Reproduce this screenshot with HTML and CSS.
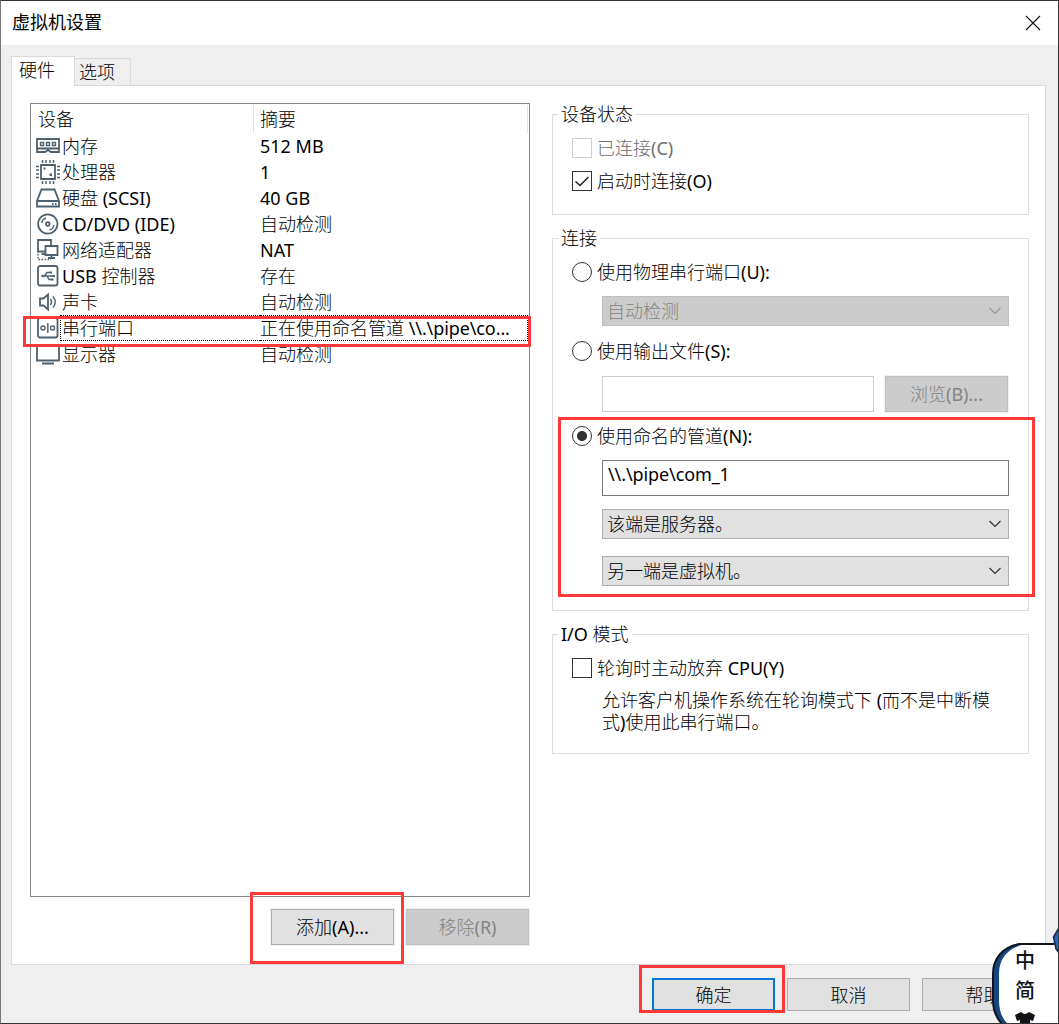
FILE: index.html
```html
<!DOCTYPE html>
<html lang="zh-CN">
<head>
<meta charset="utf-8">
<title>虚拟机设置</title>
<link rel="stylesheet" href="styles.css">
</head>
<body>
<div class="window">
  <header class="titlebar">
    <h1 class="title">虚拟机设置</h1>
    <svg class="close" width="16" height="16" viewBox="0 0 16 16"><path d="M1 1L15 15M15 1L1 15" stroke="#111" stroke-width="1.1" fill="none"/></svg>
  </header>
  <nav class="tabs">
    <div class="tab tab-active">硬件</div>
    <div class="tab">选项</div>
  </nav>
  <main class="panel">
    <section class="left">
      <div class="devices">
        <div class="row head"><span class="name">设备</span><span class="summary">摘要</span></div>
        <div class="row">
          <svg class="icon" viewBox="0 0 24 24"><path d="M1 5H23V18H15L12 16L9 18H1ZM1 14.5H23" /><path class="fine" d="M4.500 8.500h3v3h-3zM10.500 8.500h3v3h-3zM16.500 8.500h3v3h-3z"/></svg>
          <span class="name">内存</span><span class="summary"><span class="en">512 MB</span></span></div>
        <div class="row">
          <svg class="icon" viewBox="0 0 24 24"><path d="M5 5H19V19H5Z"/><path class="pins" d="M6.500 0v3M10 0v3M14 0v3M17.500 0v3M6.500 21v3M10 21v3M14 21v3M17.500 21v3M0 6.500h3M0 10h3M0 14h3M0 17.500h3M21 6.500h3M21 10h3M21 14h3M21 17.500h3"/><path class="solid" d="M7.500 7.500h2v2h-2zM13.500 13.500h2.500v2.500h-2.500z"/></svg>
          <span class="name">处理器</span><span class="summary"><span class="en">1</span></span></div>
        <div class="row">
          <svg class="icon" viewBox="0 0 24 24"><path d="M5.500 3.500H18.500L23 15V20.500H1V15ZM1 15H23M16 18h1.500M19 18h1.500"/></svg>
          <span class="name">硬盘 <span class="en">(SCSI)</span></span><span class="summary"><span class="en">40 GB</span></span></div>
        <div class="row">
          <svg class="icon" viewBox="0 0 24 24"><circle cx="11.800" cy="12" r="9.700"/><circle cx="11.800" cy="12" r="1.800"/><path class="fine" d="M5.800 11A6 6 0 0 1 10 6M17.800 13A6 6 0 0 1 13.600 18"/></svg>
          <span class="name"><span class="en">CD/DVD (IDE)</span></span><span class="summary">自动检测</span></div>
        <div class="row">
          <svg class="icon" viewBox="0 0 24 24"><path d="M9 13.500H2V2H15V7M5.500 16H9"/><path d="M9.500 8H21.500V17H9.500ZM15.500 17V20M12 20H19"/><path class="dots" d="M2 13V21.500H15"/></svg>
          <span class="name">网络适配器</span><span class="summary"><span class="en">NAT</span></span></div>
        <div class="row">
          <svg class="icon" viewBox="0 0 24 24"><rect x="2" y="2" width="19.500" height="19.500" rx="2"/><path class="fine" d="M6 12H18M8.500 12L11 8.500H14M11 12L13 15.500H16"/><path class="solid" d="M4.500 12L7.500 10.200V13.800ZM13.500 7.500h2.500v2h-2.500zM16.500 11h2.500v2h-2.500zM15 14.500h2.500v2h-2.500z"/></svg>
          <span class="name"><span class="en">USB</span> 控制器</span><span class="summary">存在</span></div>
        <div class="row">
          <svg class="icon" viewBox="0 0 24 24"><path d="M4 8.500H7.500L12 4.500V19.500L7.500 15.500H4Z"/><path class="fine" d="M14.500 9Q16.500 12 14.500 15M17 6.500Q21.500 12 17 17.500"/></svg>
          <span class="name">声卡</span><span class="summary">自动检测</span></div>
        <div class="row selected">
          <svg class="icon" viewBox="0 0 24 24"><rect x="2" y="2" width="19.500" height="19.500" rx="2"/><circle class="fine" cx="7" cy="12" r="2"/><circle class="fine" cx="16.500" cy="12" r="2"/><path class="fine" d="M11.800 7V17"/></svg>
          <span class="name">串行端口</span><span class="summary">正在使用命名管道 <span class="en path">\\.\pipe\co...</span></span></div>
        <div class="row">
          <svg class="icon" viewBox="0 0 24 24"><path d="M1 3H23V18.500H1ZM6 21.500H18"/></svg>
          <span class="name">显示器</span><span class="summary">自动检测</span></div>
      </div>
      <div class="actions">
        <button class="btn">添加<span class="en">(A)...</span></button>
        <button class="btn off">移除<span class="en">(R)</span></button>
      </div>
    </section>
    <section class="right">
      <fieldset class="group state">
        <legend>设备状态</legend>
        <label class="option dim"><span class="box"></span><span>已连接<span class="en">(C)</span></span></label>
        <label class="option"><span class="box"><svg width="18" height="18" viewBox="0 0 18 18"><path d="M2.500 9.500L7 13.500L15.500 5" fill="none" stroke="#222" stroke-width="1.600"/></svg></span><span>启动时连接<span class="en">(O)</span></span></label>
      </fieldset>
      <fieldset class="group connection">
        <legend>连接</legend>
        <label class="option"><span class="radio"></span><span>使用物理串行端口<span class="en">(U):</span></span></label>
        <div class="select off physical">自动检测<svg class="chevron" viewBox="0 0 12 8"><path d="M.5 1L6 6.500L11.500 1"/></svg></div>
        <label class="option output"><span class="radio"></span><span>使用输出文件<span class="en">(S):</span></span></label>
        <div class="browse"><div class="field empty"></div><button class="btn off">浏览<span class="en">(B)...</span></button></div>
        <label class="option named"><span class="radio on"></span><span>使用命名的管道<span class="en">(N):</span></span></label>
        <div class="field"><span class="en path">\\.\pipe\com_1</span></div>
        <div class="select near">该端是服务器。<svg class="chevron" viewBox="0 0 12 8"><path d="M.5 1L6 6.500L11.500 1"/></svg></div>
        <div class="select far">另一端是虚拟机。<svg class="chevron" viewBox="0 0 12 8"><path d="M.5 1L6 6.500L11.500 1"/></svg></div>
      </fieldset>
      <fieldset class="group io">
        <legend><span class="en">I/O</span> 模式</legend>
        <label class="option"><span class="box"></span><span>轮询时主动放弃 <span class="en">CPU(Y)</span></span></label>
        <p class="note">允许客户机操作系统在轮询模式下 <span class="en">(</span>而不是中断模<br>式<span class="en">)</span>使用此串行端口。</p>
      </fieldset>
    </section>
  </main>
  <footer class="footer">
    <button class="btn primary">确定</button>
    <button class="btn">取消</button>
    <button class="btn">帮助</button>
  </footer>
  <div class="mark mark-row"></div>
  <div class="mark mark-pipe"></div>
  <div class="mark mark-add"></div>
  <div class="mark mark-ok"></div>
  <div class="ime">
    <svg class="ime-shape" width="69" height="100" viewBox="0 0 69 100">
      <path d="M70 19H30C12 22 3 34 3 49V75C3 86 6 93 13 100H70Z" fill="#174583" stroke="#10151c" stroke-width="2"/>
      <path d="M70 19.500H34C17 23 9 34 9 49V75C9 86 12 94 19 100H70Z" fill="#fff"/>
      <path d="M30 19H64" stroke="#10151c" stroke-width="2"/>
      <path d="M70 1L63.500 12L66 24L70 29Z" fill="#2068bd" stroke="#0c2857" stroke-width="1.500"/>
      <path d="M25 90L31 87Q35 91 39 87L45 90L43 96L40 95V101H30V95L27 96Z" fill="#101216"/>
    </svg>
    <span class="ime-lang">中</span>
    <span class="ime-set">简</span>
  </div>
</div>
</body>
</html>
```
FILE: styles.css
```css
* { box-sizing: border-box; }
body {
  margin: 0;
  font: 300 18px/26px "Noto Sans", "Noto Sans CJK SC", sans-serif;
  color: #000;
}
.window {
  position: relative;
  width: 1059px;
  height: 1024px;
  overflow: hidden;
  display: flex;
  flex-direction: column;
  background: #efefef;
  border: 1px solid #333;
  border-left-color: #777;
}
.titlebar {
  height: 44px;
  padding: 0 17px 0 11px;
  display: flex;
  align-items: center;
  justify-content: space-between;
  background: #fff;
}
.title { margin: -2px 0 0; font-size: 18px; font-weight: 400; }
.tabs {
  height: 40px;
  padding-left: 10px;
  display: flex;
  align-items: flex-end;
}
.tab {
  height: 27px;
  width: 56px;
  padding-left: 4px;
  border: 1px solid #d9d9d9;
  border-left: 0;
  border-bottom: 0;
}
.tab-active {
  width: 64px;
  height: 30px;
  margin-bottom: -1px;
  padding-left: 7px;
  border-left: 1px solid #d9d9d9;
  background: #fff;
  z-index: 1;
}
.panel {
  width: 1035px;
  height: 880px;
  margin-left: 10px;
  padding: 17px 0 0 18px;
  display: flex;
  gap: 22px;
  background: #fff;
  border: 1px solid #d9d9d9;
}
.left { width: 500px; }
.devices {
  height: 794px;
  padding-left: 5px;
  border: 1px solid #828790;
}
.row {
  height: 26px;
  display: flex;
  align-items: center;
  white-space: nowrap;
}
.icon {
  width: 24px;
  height: 24px;
  flex: none;
  margin-right: 2px;
  fill: none;
  stroke: #4f616e;
  stroke-width: 1.8;
}
.icon .fine { stroke-width: 1.4; }
.icon .pins { stroke-width: 1.5; }
.icon .solid { fill: #4f616e; stroke: none; }
.icon .dots { stroke-width: 1.5; stroke-dasharray: 1.5 1.5; }
.name { width: 198px; }
.head { height: 29px; padding: 1px 0 0; }
.head .name { width: 218px; height: 28px; padding: 1px 0 0 2px; border-right: 1px solid #e3e3e3; }
.head .summary { width: 274px; height: 28px; padding: 1px 0 0 6px; border-right: 1px solid #e3e3e3; }
.selected .icon { margin-right: 0; }
.selected .name { width: 200px; height: 26px; padding-left: 1px; border: 1px dotted #000; border-right: 0; line-height: 24px; }
.selected .summary { width: 268px; height: 26px; border: 1px dotted #000; border-left: 0; line-height: 24px; }
.en { font-weight: 400; }
.path { letter-spacing: -0.1px; }
.actions {
  padding: 12px 1px 0 0;
  display: flex;
  justify-content: flex-end;
  gap: 12px;
}
.btn {
  width: 123px;
  height: 36px;
  padding: 0;
  font: inherit;
  color: #000;
  background: #e1e1e1;
  border: 1px solid #adadad;
  border-radius: 0;
}
.off.btn, .off.select { color: #838383; background: #ccc; border-color: #bfbfbf; }
.panel .btn { outline: 1px solid #f0f0f0; }
.right { width: 477px; padding-top: 1px; }
.group {
  margin: 0 0 13px;
  padding: 0 0 0 19px;
  min-width: 0;
  border: 1px solid #dcdcdc;
}
.group legend { height: 21px; line-height: 21px; margin-left: -14px; padding: 0 3px; }
.state { height: 111px; }
.connection { height: 383px; }
.io { height: 130px; }
.option {
  height: 20px;
  margin-top: 13px;
  display: flex;
  align-items: center;
  gap: 5px;
}
.dim { color: #6d6d6d; }
.box, .radio { width: 20px; height: 20px; flex: none; border: 1px solid #333; }
.box svg { display: block; }
.dim .box { border-color: #ccc; }
.radio { border-radius: 50%; }
.on { background: radial-gradient(circle, #333 0 4.600px, #fff 5.400px); }
.select, .field {
  width: 407px;
  margin-left: 30px;
  padding-left: 4px;
}
.select {
  height: 30px;
  padding-right: 7px;
  display: flex;
  align-items: center;
  justify-content: space-between;
  background: #e1e1e1;
  border: 1px solid #adadad;
}
.chevron { width: 12px; height: 8px; fill: none; stroke: #333; stroke-width: 1.2; }
.off .chevron { stroke: #999; }
.field { height: 36px; margin-top: 14px; padding-left: 5px; border: 1px solid #7a7a7a; }
.physical { margin-top: 14px; }
.output { margin-top: 15px; }
.browse { display: flex; gap: 11px; margin-top: 15px; }
.browse .empty { width: 272px; margin-top: 0; border-color: #ccc; }
.named { margin-top: 14px; }
.near { margin-top: 13px; }
.far { margin-top: 17px; }
.note { margin: 11px 0 0 30px; line-height: 22px; white-space: nowrap; }
.footer { display: flex; gap: 12px; margin: 13px 0 0 651px; }
.footer .btn { height: 33px; flex: none; }
.footer .primary { border: 2px solid #0078d7; }
.mark { position: absolute; border: 3px solid #ff3838; }
.mark-row { left: 22px; top: 315px; width: 508px; height: 31px; }
.mark-pipe { left: 557px; top: 416px; width: 477px; height: 180px; }
.mark-add { left: 249px; top: 891px; width: 154px; height: 72px; }
.mark-ok { left: 638px; top: 964px; width: 146px; height: 48px; }
.ime { position: absolute; left: 989px; top: 924px; width: 69px; height: 100px; font-weight: 500; font-size: 20px; line-height: 30px; color: #101216; }
.ime-shape { position: absolute; left: 0; top: 0; }
.ime-lang, .ime-set { position: absolute; left: 25px; }
.ime-lang { top: 21px; }
.ime-set { top: 51px; }
```
